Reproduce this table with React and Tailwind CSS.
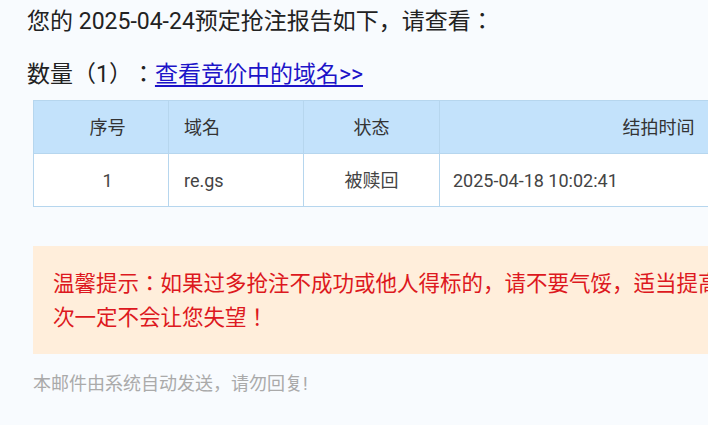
import React from 'react';

const FONT = { fontFamily: 'Roboto, "Noto Sans CJK JP", "Noto Sans CJK SC", sans-serif' };

export default function App() {
  return (
    <div className="w-[708px] h-[425px] overflow-hidden bg-[#f8fbfe] [text-spacing-trim:space-all]" style={FONT}>
      <div className="w-[1000px] pl-[27px] pt-[5px]">
        <p className="text-[23px] leading-[34px] text-[#222]">您的 2025-04-24预定抢注报告如下，请查看：</p>
        <p className="mt-[19px] text-[23px] leading-[34px] text-[#222]">
          数量（1）：<a href="#" className="text-[#1d14c8] underline underline-offset-[3px]">查看竞价中的域名&gt;&gt;</a>
        </p>

        {/* report table */}
        <table className="ml-[6px] mt-[8px] border-collapse text-[18px] table-fixed">
          <thead>
            <tr className="bg-[#c3e2fb] text-[#333]">
              <th className="w-[135px] h-[53px] border border-[#b6d6ee] font-normal text-center pl-[13px]">序号</th>
              <th className="w-[135px] border border-[#b6d6ee] font-normal text-left pl-[15px]">域名</th>
              <th className="w-[136px] border border-[#b6d6ee] font-normal text-center">状态</th>
              <th className="w-[438px] border border-[#b6d6ee] font-normal text-center">结拍时间</th>
            </tr>
          </thead>
          <tbody>
            <tr className="bg-white text-[#444]">
              <td className="h-[53px] border border-[#b6d6ee] text-center pl-[13px]">1</td>
              <td className="border border-[#b6d6ee] pl-[15px]">re.gs</td>
              <td className="border border-[#b6d6ee] text-center">被赎回</td>
              <td className="border border-[#b6d6ee] pl-[13px]">2025-04-18 10:02:41</td>
            </tr>
          </tbody>
        </table>

        <div className="ml-[6px] mt-[39px] w-[900px] bg-[#ffeedb] pl-[20px] pt-[21px] pb-[19px] text-[21.5px] leading-[34px] text-[#dd1820]">
          <p className="whitespace-nowrap">温馨提示：如果过多抢注不成功或他人得标的，请不要气馁，适当提高预算价格，下</p>
          <p className="whitespace-nowrap">次一定不会让您失望！</p>
        </div>

        <p className="ml-[6px] mt-[16px] text-[18px] leading-[27px] text-[#aaa]">本邮件由系统自动发送，请勿回复!</p>
      </div>
    </div>
  );
}
